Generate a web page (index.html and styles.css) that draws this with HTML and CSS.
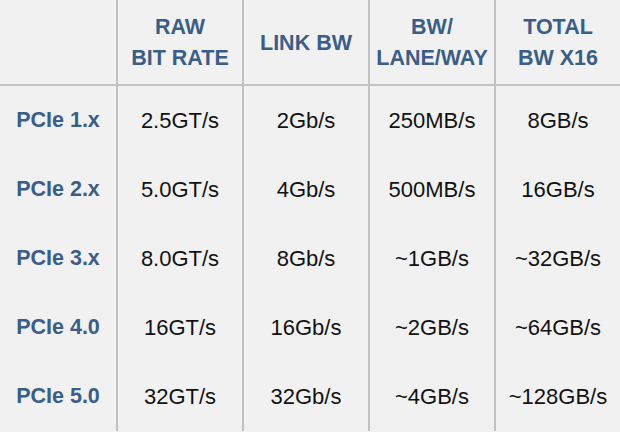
FILE: index.html
```html
<!DOCTYPE html>
<html>
<head>
<meta charset="utf-8">
<link rel="stylesheet" href="styles.css">
</head>
<body>
<div class="table">
  <div class="cell head"></div>
  <div class="cell head sep">RAW<br>BIT RATE</div>
  <div class="cell head sep">LINK BW</div>
  <div class="cell head sep">BW/<br>LANE/WAY</div>
  <div class="cell head sep">TOTAL<br>BW X16</div>

  <div class="cell label">PCIe 1.x</div>
  <div class="cell sep">2.5GT/s</div>
  <div class="cell sep">2Gb/s</div>
  <div class="cell sep">250MB/s</div>
  <div class="cell sep">8GB/s</div>

  <div class="cell label">PCIe 2.x</div>
  <div class="cell sep">5.0GT/s</div>
  <div class="cell sep">4Gb/s</div>
  <div class="cell sep">500MB/s</div>
  <div class="cell sep">16GB/s</div>

  <div class="cell label">PCIe 3.x</div>
  <div class="cell sep">8.0GT/s</div>
  <div class="cell sep">8Gb/s</div>
  <div class="cell sep">~1GB/s</div>
  <div class="cell sep">~32GB/s</div>

  <div class="cell label">PCIe 4.0</div>
  <div class="cell sep">16GT/s</div>
  <div class="cell sep">16Gb/s</div>
  <div class="cell sep">~2GB/s</div>
  <div class="cell sep">~64GB/s</div>

  <div class="cell label">PCIe 5.0</div>
  <div class="cell sep">32GT/s</div>
  <div class="cell sep">32Gb/s</div>
  <div class="cell sep">~4GB/s</div>
  <div class="cell sep">~128GB/s</div>
</div>
</body>
</html>
```
FILE: styles.css
```css
html, body {
  margin: 0;
  padding: 0;
  background: #f1f1f1;
}
body {
  width: 620px;
  height: 432px;
  overflow: hidden;
  font-family: "Liberation Sans", Arial, sans-serif;
}
.table {
  display: grid;
  grid-template-columns: 116px 126px 126px 126px 126px;
  grid-template-rows: 86px repeat(5, 69px);
}
.cell {
  display: flex;
  align-items: center;
  justify-content: center;
  text-align: center;
  font-size: 22px;
  color: #121212;
}
.sep {
  border-left: 2px solid #c2c2c2;
  box-sizing: border-box;
}
.head {
  border-bottom: 2px solid #c2c2c2;
  box-sizing: border-box;
  font-weight: bold;
  color: #3a5e88;
  font-size: 21.5px;
  line-height: 31px;
  padding-top: 2px;
}
.label {
  font-weight: bold;
  color: #3a5e88;
  font-size: 21.5px;
}
```
